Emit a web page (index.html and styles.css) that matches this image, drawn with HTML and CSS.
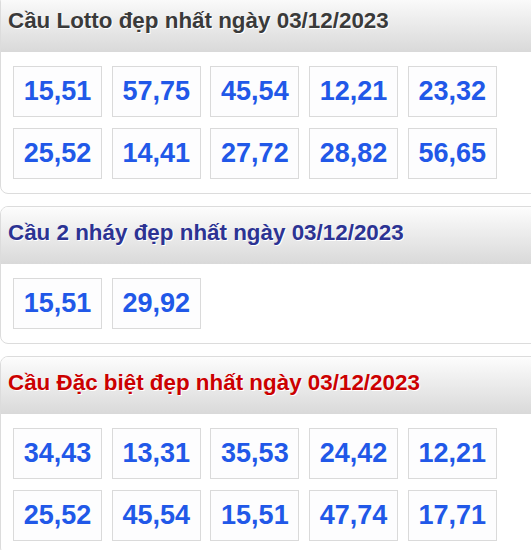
FILE: index.html
```html
<!DOCTYPE html>
<html lang="vi">
<head>
<meta charset="utf-8">
<title>Cầu Lotto</title>
<link rel="stylesheet" href="styles.css">
</head>
<body>
<div class="page">
  <section class="card card-first">
    <h2 class="card-title title-dark">Cầu Lotto đẹp nhất ngày 03/12/2023</h2>
    <div class="nums">
      <span class="num">15,51</span>
      <span class="num">57,75</span>
      <span class="num">45,54</span>
      <span class="num">12,21</span>
      <span class="num">23,32</span>
      <span class="num">25,52</span>
      <span class="num">14,41</span>
      <span class="num">27,72</span>
      <span class="num">28,82</span>
      <span class="num">56,65</span>
    </div>
  </section>
  <section class="card">
    <h2 class="card-title title-navy">Cầu 2 nháy đẹp nhất ngày 03/12/2023</h2>
    <div class="nums">
      <span class="num">15,51</span>
      <span class="num">29,92</span>
    </div>
  </section>
  <section class="card">
    <h2 class="card-title title-red">Cầu Đặc biệt đẹp nhất ngày 03/12/2023</h2>
    <div class="nums">
      <span class="num">34,43</span>
      <span class="num">13,31</span>
      <span class="num">35,53</span>
      <span class="num">24,42</span>
      <span class="num">12,21</span>
      <span class="num">25,52</span>
      <span class="num">45,54</span>
      <span class="num">15,51</span>
      <span class="num">47,74</span>
      <span class="num">17,71</span>
    </div>
  </section>
</div>
</body>
</html>
```
FILE: styles.css
```css
html, body {
  margin: 0;
  padding: 0;
  overflow: hidden;
  background: #fff;
}
body {
  font-family: "Liberation Sans", Arial, sans-serif;
}
.page {
  margin-right: -20px;
}
.card {
  border: 1px solid #dcdcdc;
  border-radius: 8px;
  background: #fff;
  margin-bottom: 12px;
  overflow: hidden;
}
.card-first {
  margin-top: -6px;
}
.card-title {
  margin: 0;
  height: 57px;
  box-sizing: border-box;
  padding: 12px 0 17px 7px;
  font-size: 22.4px;
  line-height: 28px;
  font-weight: bold;
  text-shadow: 1px 1px 0 #fff;
  background: linear-gradient(to bottom, #fdfdfd 0%, #f0f0f0 35%, #d9d9d9 100%);
}
.title-dark { color: #3a3a3a; }
.title-navy { color: #2c3393; }
.title-red { color: #cc0000; }
.nums {
  display: flex;
  flex-wrap: wrap;
  column-gap: 9.7px;
  row-gap: 11px;
  padding: 14px 12px 14px 12px;
  width: 500px;
}
.num {
  box-sizing: border-box;
  width: 89px;
  height: 51px;
  border: 1px solid #dadada;
  background: #fdfdfe;
  color: #2158e8;
  font-size: 27px;
  font-weight: bold;
  line-height: 49px;
  text-align: center;
}
```
